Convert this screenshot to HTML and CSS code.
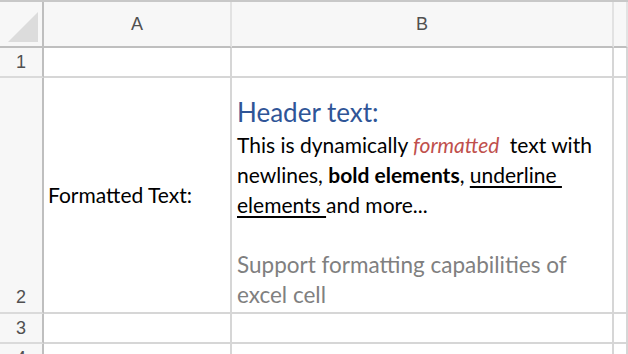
FILE: index.html
```html
<!DOCTYPE html>
<html lang="en">
<head>
    <meta charset="UTF-8">
    <meta name="viewport" content="width=device-width, initial-scale=1.0">
    <title>Formatted cell</title>
    <link rel="stylesheet" href="styles.css">
</head>
<body>
    <div class="sheet">
        <!-- header row -->
        <div class="corner"><div class="corner-mark"></div></div>
        <div class="col-head">A</div>
        <div class="col-head">B</div>
        <div class="col-head"></div>

        <!-- row 1 -->
        <div class="row-head">1</div>
        <div class="cell"></div>
        <div class="cell"></div>
        <div class="cell"></div>

        <!-- row 2 -->
        <div class="row-head bottom">2</div>
        <div class="cell label">Formatted Text:</div>
        <div class="cell rich">
            <div class="rich-title">Header text:</div>
            <div class="rich-body">This is dynamically <i class="red">formatted&nbsp;</i> text with<br>newlines, <b>bold elements</b>, <u>underline&nbsp;<br>elements&nbsp;</u>and more...<br>&nbsp;<br><span class="muted">Support formatting capabilities of<br>excel cell</span></div>
        </div>
        <div class="cell"></div>

        <!-- row 3 -->
        <div class="row-head">3</div>
        <div class="cell"></div>
        <div class="cell"></div>
        <div class="cell"></div>

        <!-- row 4 -->
        <div class="row-head top">4</div>
        <div class="cell"></div>
        <div class="cell"></div>
        <div class="cell"></div>
    </div>
</body>
</html>
```

FILE: styles.css
```css
* {
    margin: 0;
    padding: 0;
    box-sizing: border-box;
}

body {
    background: #fff;
    overflow: hidden;
    font-family: "Liberation Sans", Arial, sans-serif;
}

.sheet {
    display: grid;
    grid-template-columns: 44px 188px 382px 1fr;
    grid-template-rows: 46px 30px 236px 30px 40px;
    border-top: 2px solid #c8c8c8;
    height: 354px;
    overflow: hidden;
}

.corner {
    background: #f7f7f7;
    border-right: 2px solid #bfbfbf;
    border-bottom: 2px solid #bfbfbf;
    display: flex;
    justify-content: flex-end;
    align-items: flex-end;
    padding: 0 4px 4px 0;
}

.corner-mark {
    width: 30px;
    height: 30px;
    background: #dcdcdc;
    clip-path: polygon(100% 0, 100% 100%, 0 100%);
}

.col-head {
    background: #f7f7f7;
    border-right: 2px solid #e2e2e2;
    border-bottom: 2px solid #bfbfbf;
    display: flex;
    justify-content: center;
    align-items: center;
    font-size: 18px;
    color: #505050;
}

.row-head {
    background: #f7f7f7;
    border-right: 2px solid #bfbfbf;
    border-bottom: 2px solid #dadada;
    display: flex;
    justify-content: center;
    align-items: center;
    font-size: 18px;
    color: #505050;
}

.row-head.bottom {
    align-items: flex-end;
    padding-bottom: 4px;
}

.row-head.top {
    align-items: flex-start;
    padding-top: 4px;
}

.cell {
    border-right: 2px solid #d6d6d6;
    border-bottom: 2px solid #d6d6d6;
    font-family: Lato, "Liberation Sans", sans-serif;
    font-size: 21px;
    line-height: 30px;
    color: #000;
}

.label {
    display: flex;
    align-items: center;
    padding-left: 4px;
}

.rich {
    display: flex;
    flex-direction: column;
    justify-content: flex-end;
    padding: 0 5px 2px 5px;
    white-space: nowrap;
}

.rich-title {
    font-size: 26px;
    line-height: 35px;
    color: #2f5597;
}

.red {
    color: #c0504d;
}

.rich-body u {
    text-decoration-thickness: 2px;
    text-underline-offset: 3px;
}

.muted {
    font-size: 22.5px;
    color: #808080;
}
```
